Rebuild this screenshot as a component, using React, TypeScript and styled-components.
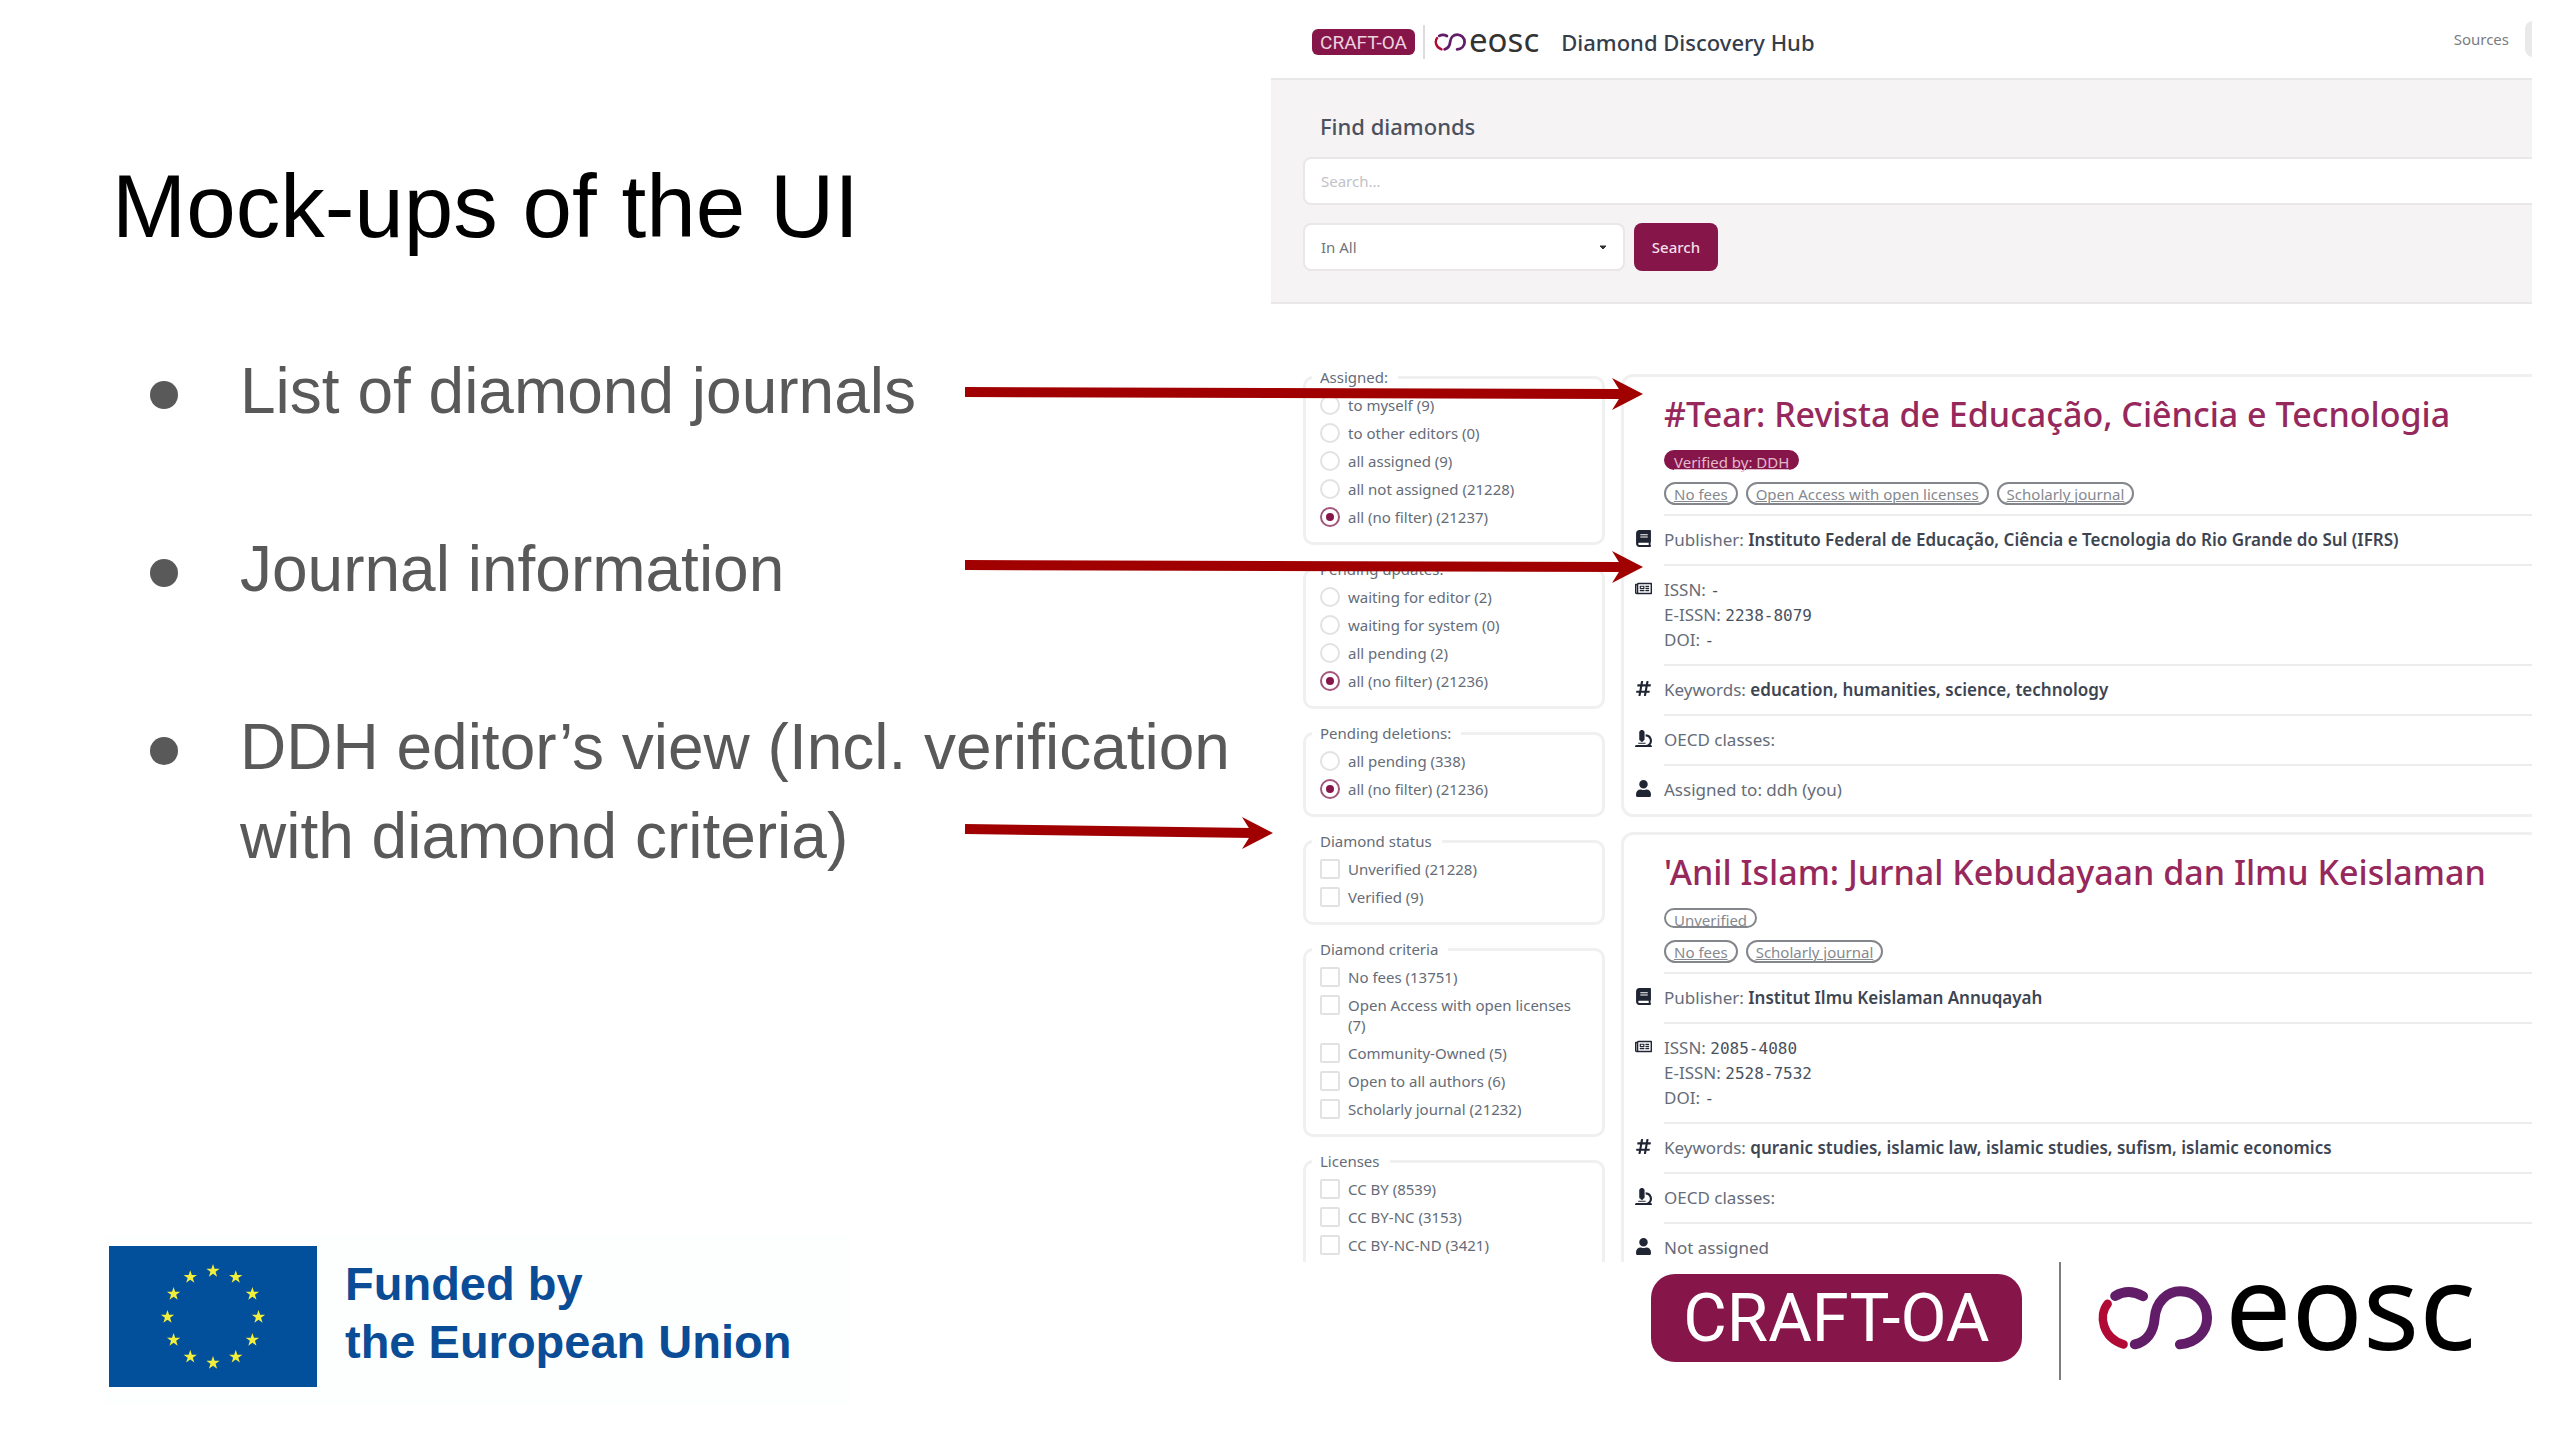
import React from "react";
import styled, { createGlobalStyle, css } from "styled-components";
import { FaBook, FaRegNewspaper, FaHashtag, FaMicroscope, FaUser } from "react-icons/fa";

const plum = "#86164a";
const line = "#f0f0f1";
const uiFont = '"Noto Sans", "Open Sans", sans-serif';

const GlobalStyle = createGlobalStyle`
  *, *::before, *::after { box-sizing: border-box; }
  body { margin: 0; background: #fff; }
  h1, h2, h3, p, ul { margin: 0; padding: 0; }
`;

/* ---------- slide ---------- */

const Slide = styled.main`
  position: relative;
  display: grid;
  grid-template-columns: 1271fr 1261fr;
  height: 100vh;
  padding-right: 28px;
  overflow: hidden;
  font-family: "Liberation Sans", Arial, sans-serif;
`;

const Talk = styled.section`
  display: flex;
  flex-direction: column;
  padding: 156px 0 35px 106px;
`;

const Title = styled.h1`
  padding-left: 6px;
  font-size: 89px;
  font-weight: 400;
  line-height: 100px;
  color: #000;
`;

const Points = styled.ul`
  display: flex;
  flex-direction: column;
  gap: 89px;
  margin-top: 91px;
  list-style: none;
`;

const Point = styled.li`
  display: grid;
  grid-template-columns: 28px 1fr;
  column-gap: 62px;
  padding-left: 44px;
  font-size: 64px;
  line-height: 89px;
  color: #595959;

  &::before {
    content: "";
    height: 28px;
    margin-top: 34px;
    border-radius: 50%;
    background: #595959;
  }
`;

const Funder = styled.div`
  display: flex;
  gap: 28px;
  width: 744px;
  margin-top: auto;
  padding: 11px 0 18px 3px;
  background: #fdfffe;
`;

const Flag = styled.svg`
  width: 208px;
  height: 141px;
`;

const FunderText = styled.p`
  padding-top: 9px;
  font-size: 47px;
  font-weight: 700;
  line-height: 58px;
  color: #0b4c96;
`;

const ArrowLayer = styled.svg`
  position: absolute;
  inset: 0;
  width: 100%;
  height: 100%;
  pointer-events: none;
`;

/* ---------- brand ---------- */

type Size = { $large?: boolean };

const BrandRow = styled.div<Size>`
  display: flex;
  align-items: center;
  ${(p) =>
    p.$large &&
    css`
      justify-content: flex-end;
      height: 118px;
      margin-bottom: 60px;
      padding-right: 56px;
    `}
`;

const CraftBadge = styled.span<Size>`
  display: grid;
  place-items: center;
  width: ${(p) => (p.$large ? 371 : 103)}px;
  height: ${(p) => (p.$large ? 88 : 26)}px;
  margin-bottom: ${(p) => (p.$large ? 6 : 0)}px;
  border-radius: ${(p) => (p.$large ? 24 : 6)}px;
  background: ${plum};
  color: ${(p) => (p.$large ? "#fff" : "#ecd3df")};
  font-family: Roboto, sans-serif;
  font-size: ${(p) => (p.$large ? 67 : 19)}px;
  line-height: 1;
`;

const BrandRule = styled.span<Size>`
  width: 2px;
  height: ${(p) => (p.$large ? 118 : 34)}px;
  margin: ${(p) => (p.$large ? "0 35px 0 37px" : "0 9px 0 8px")};
  background: ${(p) => (p.$large ? "#7d7d7d" : "#dcdcdc")};
`;

const EoscMark = styled.svg<Size>`
  width: ${(p) => (p.$large ? 120 : 33)}px;
  height: ${(p) => (p.$large ? 68 : 20)}px;
  margin-bottom: ${(p) => (p.$large ? 6 : 0)}px;
`;

const EoscText = styled.span<Size>`
  display: flex;
  align-items: center;
  height: ${(p) => (p.$large ? 118 : 34)}px;
  margin-left: ${(p) => (p.$large ? 9 : 2)}px;
  padding-bottom: ${(p) => (p.$large ? 32 : 6)}px;
  color: ${(p) => (p.$large ? "#000" : "#333")};
  font-family: ${uiFont};
  font-size: ${(p) => (p.$large ? 118 : 33)}px;
  line-height: 1;
`;

function Brand({ large }: { large?: boolean }) {
  return (
    <BrandRow $large={large}>
      <CraftBadge $large={large}>CRAFT-OA</CraftBadge>
      <BrandRule $large={large} />
      <EoscMark $large={large} viewBox="140 70 360 205" fill="none" strokeWidth="30" aria-hidden="true">
        <path d="M197 106 Q238 82 281 107" stroke="#611d68" strokeLinecap="round" />
        <path d="M174 130 C146 165 158 232 222 252" stroke="#b00a35" strokeLinecap="round" strokeWidth="26" />
        <path
          d="M256 252 C292 244 313 215 316 172 C320 125 352 92 394 92 C438 92 474 128 474 172 C474 215 440 248 392 252"
          stroke="#611d68"
          strokeLinecap="round"
          strokeWidth="30"
        />
      </EoscMark>
      <EoscText $large={large}>eosc</EoscText>
    </BrandRow>
  );
}

/* ---------- captured application ---------- */

const Side = styled.div`
  display: flex;
  flex-direction: column;
  min-width: 0;
  min-height: 0;
`;

const Hub = styled.section`
  flex: 1;
  min-height: 0;
  overflow: hidden;
  font-family: ${uiFont};
  font-size: 15px;
  line-height: 20px;
  color: #656c78;
`;

const HubHeader = styled.header`
  display: flex;
  align-items: center;
  height: 80px;
  padding: 8px 0 2px 41px;
  border-bottom: 2px solid #e9e7e8;
`;

const HubName = styled.h2`
  margin-left: 22px;
  font-size: 22px;
  font-weight: 500;
  line-height: 28px;
  color: #353d4b;
`;

const HubNav = styled.nav`
  display: flex;
  align-items: center;
  gap: 16px;
  margin: 0 -33px 6px auto;
`;

const NavLink = styled.a`
  color: #7a7d82;
  text-decoration: none;
`;

const NavButton = styled.button`
  width: 40px;
  height: 36px;
  border: 0;
  border-radius: 8px;
  background: #e9e9e9;
`;

const SearchForm = styled.form`
  display: grid;
  grid-template-columns: 322px 84px 1fr;
  column-gap: 9px;
  row-gap: 18px;
  padding: 33px 0 31px 32px;
  border-bottom: 2px solid #e9e7e8;
  background: #f6f3f5;
`;

const FormTitle = styled.h3`
  grid-column: 1 / -1;
  padding-left: 17px;
  font-size: 22px;
  font-weight: 500;
  line-height: 26px;
  color: #4b515c;
`;

const fieldBox = css`
  height: 48px;
  padding: 0 16px;
  border: 2px solid #e9e7e9;
  border-radius: 8px;
  background: #fff;
  font-family: inherit;
  font-size: 15px;
`;

const SearchInput = styled.input`
  ${fieldBox}
  grid-column: 1 / -1;
  margin-right: -20px;
  &::placeholder { color: #bfc2c6; opacity: 1; }
`;

const SelectWrap = styled.div`
  display: grid;
  align-items: center;
  & > * { grid-area: 1 / 1; }
`;

const ScopeSelect = styled.select`
  ${fieldBox}
  appearance: none;
  color: #6f747c;
`;

const Caret = styled.svg`
  justify-self: end;
  width: 8px;
  height: 5px;
  margin-right: 18px;
  pointer-events: none;
`;

const SearchButton = styled.button`
  height: 48px;
  border: 0;
  border-radius: 8px;
  background: ${plum};
  color: #f3dfe8;
  font-family: inherit;
  font-size: 15px;
  font-weight: 500;
`;

const HubBody = styled.div`
  display: grid;
  grid-template-columns: 302px 1fr;
  column-gap: 16px;
  padding: 63px 0 0 32px;
`;

const Filters = styled.aside`
  display: flex;
  flex-direction: column;
  gap: 14px;
`;

const Group = styled.fieldset`
  min-width: 0;
  margin: 0;
  padding: 4px 14px 11px;
  border: 3px solid ${line};
  border-radius: 10px;
`;

const GroupName = styled.legend`
  margin-left: -8px;
  padding: 0 10px 0 8px;
`;

const Choice = styled.label`
  display: grid;
  grid-template-columns: 20px 1fr;
  column-gap: 8px;
  padding: 4px 0;
`;

const Tick = styled.input`
  appearance: none;
  display: grid;
  place-items: center;
  width: 20px;
  height: 20px;
  margin: 0;
  border: 2px solid #e2e2e3;
  border-radius: 2px;

  &[type="radio"] { border-radius: 50%; }
  &:checked { border-color: #a5547b; }
  &:checked::after {
    content: "";
    width: 8px;
    height: 8px;
    border-radius: 50%;
    background: ${plum};
  }
`;

const Results = styled.div`
  display: flex;
  flex-direction: column;
  gap: 15px;
  min-width: 0;
  margin-right: -20px;
  padding-top: 7px;
`;

const Card = styled.article`
  padding: 15px 0 0 11px;
  border: 3px solid ${line};
  border-radius: 12px;
`;

const CardHead = styled.div`
  padding-left: 29px;
`;

const JournalTitle = styled.h3`
  font-size: 34px;
  font-weight: 500;
  line-height: 44px;
  white-space: nowrap;
`;

const JournalLink = styled.a`
  color: #97285c;
  text-decoration: none;
`;

const Status = styled.div`
  display: flex;
  height: 20px;
  margin: 14px 0 12px;
`;

const Tags = styled.div`
  display: flex;
  gap: 8px;
  height: 23px;
  margin-bottom: 9px;
`;

const Pill = styled.a<{ $solid?: boolean }>`
  padding: 2px 8px 0;
  border: 2px solid ${(p) => (p.$solid ? plum : "#83868a")};
  border-radius: 12px;
  background: ${(p) => (p.$solid ? plum : "transparent")};
  color: ${(p) => (p.$solid ? "#e3b9cc" : "#85898f")};
  line-height: 16px;
`;

const Fact = styled.div`
  display: grid;
  grid-template-columns: 17px 1fr;
  column-gap: 12px;
  font-size: 17px;
  line-height: 25px;
`;

const FactIcon = styled.span`
  display: flex;
  align-items: center;
  justify-content: center;
  height: 25px;
  margin-top: 12px;
  color: #1f2533;
  font-size: 17px;
`;

const FactText = styled.div`
  padding: 11px 0 12px;
  border-top: 2px solid #ececec;
  white-space: nowrap;
`;

const Strong = styled.strong`
  font-weight: 600;
  color: #3d4552;
`;

const Code = styled.span`
  font-family: "DejaVu Sans Mono", monospace;
  font-size: 16px;
  line-height: 1;
  color: #4a515d;
`;

/* ---------- data ---------- */

type FilterGroup = { name: string; kind: "radio" | "checkbox"; options: string[]; checked?: number };

const groups: FilterGroup[] = [
  {
    name: "Assigned:",
    kind: "radio",
    options: ["to myself (9)", "to other editors (0)", "all assigned (9)", "all not assigned (21228)", "all (no filter) (21237)"],
    checked: 4,
  },
  {
    name: "Pending updates:",
    kind: "radio",
    options: ["waiting for editor (2)", "waiting for system (0)", "all pending (2)", "all (no filter) (21236)"],
    checked: 3,
  },
  { name: "Pending deletions:", kind: "radio", options: ["all pending (338)", "all (no filter) (21236)"], checked: 1 },
  { name: "Diamond status", kind: "checkbox", options: ["Unverified (21228)", "Verified (9)"] },
  {
    name: "Diamond criteria",
    kind: "checkbox",
    options: [
      "No fees (13751)",
      "Open Access with open licenses (7)",
      "Community-Owned (5)",
      "Open to all authors (6)",
      "Scholarly journal (21232)",
    ],
  },
  { name: "Licenses", kind: "checkbox", options: ["CC BY (8539)", "CC BY-NC (3153)", "CC BY-NC-ND (3421)"] },
];

type Journal = {
  title: string;
  status: string;
  verified?: boolean;
  tags: string[];
  publisher: string;
  issn: string;
  eissn: string;
  keywords: string;
  assigned: string;
};

const journals: Journal[] = [
  {
    title: "#Tear: Revista de Educação, Ciência e Tecnologia",
    status: "Verified by: DDH",
    verified: true,
    tags: ["No fees", "Open Access with open licenses", "Scholarly journal"],
    publisher: "Instituto Federal de Educação, Ciência e Tecnologia do Rio Grande do Sul (IFRS)",
    issn: "-",
    eissn: "2238-8079",
    keywords: "education, humanities, science, technology",
    assigned: "Assigned to: ddh (you)",
  },
  {
    title: "'Anil Islam: Jurnal Kebudayaan dan Ilmu Keislaman",
    status: "Unverified",
    tags: ["No fees", "Scholarly journal"],
    publisher: "Institut Ilmu Keislaman Annuqayah",
    issn: "2085-4080",
    eissn: "2528-7532",
    keywords: "quranic studies, islamic law, islamic studies, sufism, islamic economics",
    assigned: "Not assigned",
  },
];

const arrows = [
  { x1: 965, y1: 392, x2: 1643, y2: 394 },
  { x1: 965, y1: 565, x2: 1643, y2: 567 },
  { x1: 965, y1: 829, x2: 1273, y2: 833 },
];

const star = Array.from({ length: 10 }, (_, i) => {
  const r = i % 2 ? 2.7 : 7;
  const a = (Math.PI / 5) * i - Math.PI / 2;
  return `${(r * Math.cos(a)).toFixed(2)},${(r * Math.sin(a)).toFixed(2)}`;
}).join(" ");

/* ---------- parts ---------- */

function FilterBox({ group }: { group: FilterGroup }) {
  return (
    <Group>
      <GroupName>{group.name}</GroupName>
      {group.options.map((option, i) => (
        <Choice key={option}>
          <Tick type={group.kind} name={group.name} defaultChecked={group.checked === i} />
          <span>{option}</span>
        </Choice>
      ))}
    </Group>
  );
}

function Row({ icon, children }: { icon: React.ReactNode; children: React.ReactNode }) {
  return (
    <Fact>
      <FactIcon>{icon}</FactIcon>
      <FactText>{children}</FactText>
    </Fact>
  );
}

function JournalCard({ journal }: { journal: Journal }) {
  return (
    <Card>
      <CardHead>
        <JournalTitle>
          <JournalLink href="#journal">{journal.title}</JournalLink>
        </JournalTitle>
        <Status>
          <Pill href="#status" $solid={journal.verified}>{journal.status}</Pill>
        </Status>
        <Tags>
          {journal.tags.map((tag) => (
            <Pill key={tag} href="#tag">{tag}</Pill>
          ))}
        </Tags>
      </CardHead>
      <Row icon={<FaBook />}>
        Publisher: <Strong>{journal.publisher}</Strong>
      </Row>
      <Row icon={<FaRegNewspaper />}>
        <div>ISSN: <Code>{journal.issn}</Code></div>
        <div>E-ISSN: <Code>{journal.eissn}</Code></div>
        <div>DOI: <Code>-</Code></div>
      </Row>
      <Row icon={<FaHashtag />}>
        Keywords: <Strong>{journal.keywords}</Strong>
      </Row>
      <Row icon={<FaMicroscope />}>OECD classes:</Row>
      <Row icon={<FaUser />}>{journal.assigned}</Row>
    </Card>
  );
}

function Arrow({ x1, y1, x2, y2 }: { x1: number; y1: number; x2: number; y2: number }) {
  return (
    <g>
      <line x1={x1} y1={y1} x2={x2 - 20} y2={y2} stroke="#a00000" strokeWidth="10" />
      <path d={`M${x2} ${y2} l-31 -16 l10 16 l-10 16 z`} fill="#a00000" />
    </g>
  );
}

export default function App() {
  return (
    <>
      <GlobalStyle />
      <Slide>
        <Talk>
          <Title>Mock-ups of the UI</Title>
          <Points>
            <Point>List of diamond journals</Point>
            <Point>Journal information</Point>
            <Point>DDH editor’s view (Incl. verification with diamond criteria)</Point>
          </Points>
          <Funder>
            <Flag viewBox="0 0 208 141" role="img" aria-label="Flag of the European Union">
              <rect width="208" height="141" fill="#02509b" />
              {Array.from({ length: 12 }, (_, i) => {
                const a = (Math.PI / 6) * i;
                return (
                  <polygon
                    key={i}
                    points={star}
                    fill="#f2ee3c"
                    transform={`translate(${(104 + 45.5 * Math.sin(a)).toFixed(2)} ${(71 - 46 * Math.cos(a)).toFixed(2)})`}
                  />
                );
              })}
            </Flag>
            <FunderText>
              Funded by
              <br />
              the European Union
            </FunderText>
          </Funder>
        </Talk>

        <Side>
          <Hub>
            <HubHeader>
              <Brand />
              <HubName>Diamond Discovery Hub</HubName>
              <HubNav>
                <NavLink href="#sources">Sources</NavLink>
                <NavButton type="button" aria-label="Menu" />
              </HubNav>
            </HubHeader>
            <SearchForm>
              <FormTitle>Find diamonds</FormTitle>
              <SearchInput type="search" placeholder="Search..." aria-label="Search" />
              <SelectWrap>
                <ScopeSelect aria-label="Search in">
                  <option>In All</option>
                </ScopeSelect>
                <Caret viewBox="0 0 8 5" aria-hidden="true">
                  <path d="M1 1 h6 l-3 3 z" fill="#333" stroke="#333" strokeLinejoin="round" />
                </Caret>
              </SelectWrap>
              <SearchButton type="button">Search</SearchButton>
            </SearchForm>
            <HubBody>
              <Filters>
                {groups.map((group) => (
                  <FilterBox key={group.name} group={group} />
                ))}
              </Filters>
              <Results>
                {journals.map((journal) => (
                  <JournalCard key={journal.title} journal={journal} />
                ))}
              </Results>
            </HubBody>
          </Hub>
          <Brand large />
        </Side>

        <ArrowLayer viewBox="0 0 2560 1440" aria-hidden="true">
          {arrows.map((arrow) => (
            <Arrow key={arrow.y1} {...arrow} />
          ))}
        </ArrowLayer>
      </Slide>
    </>
  );
}
